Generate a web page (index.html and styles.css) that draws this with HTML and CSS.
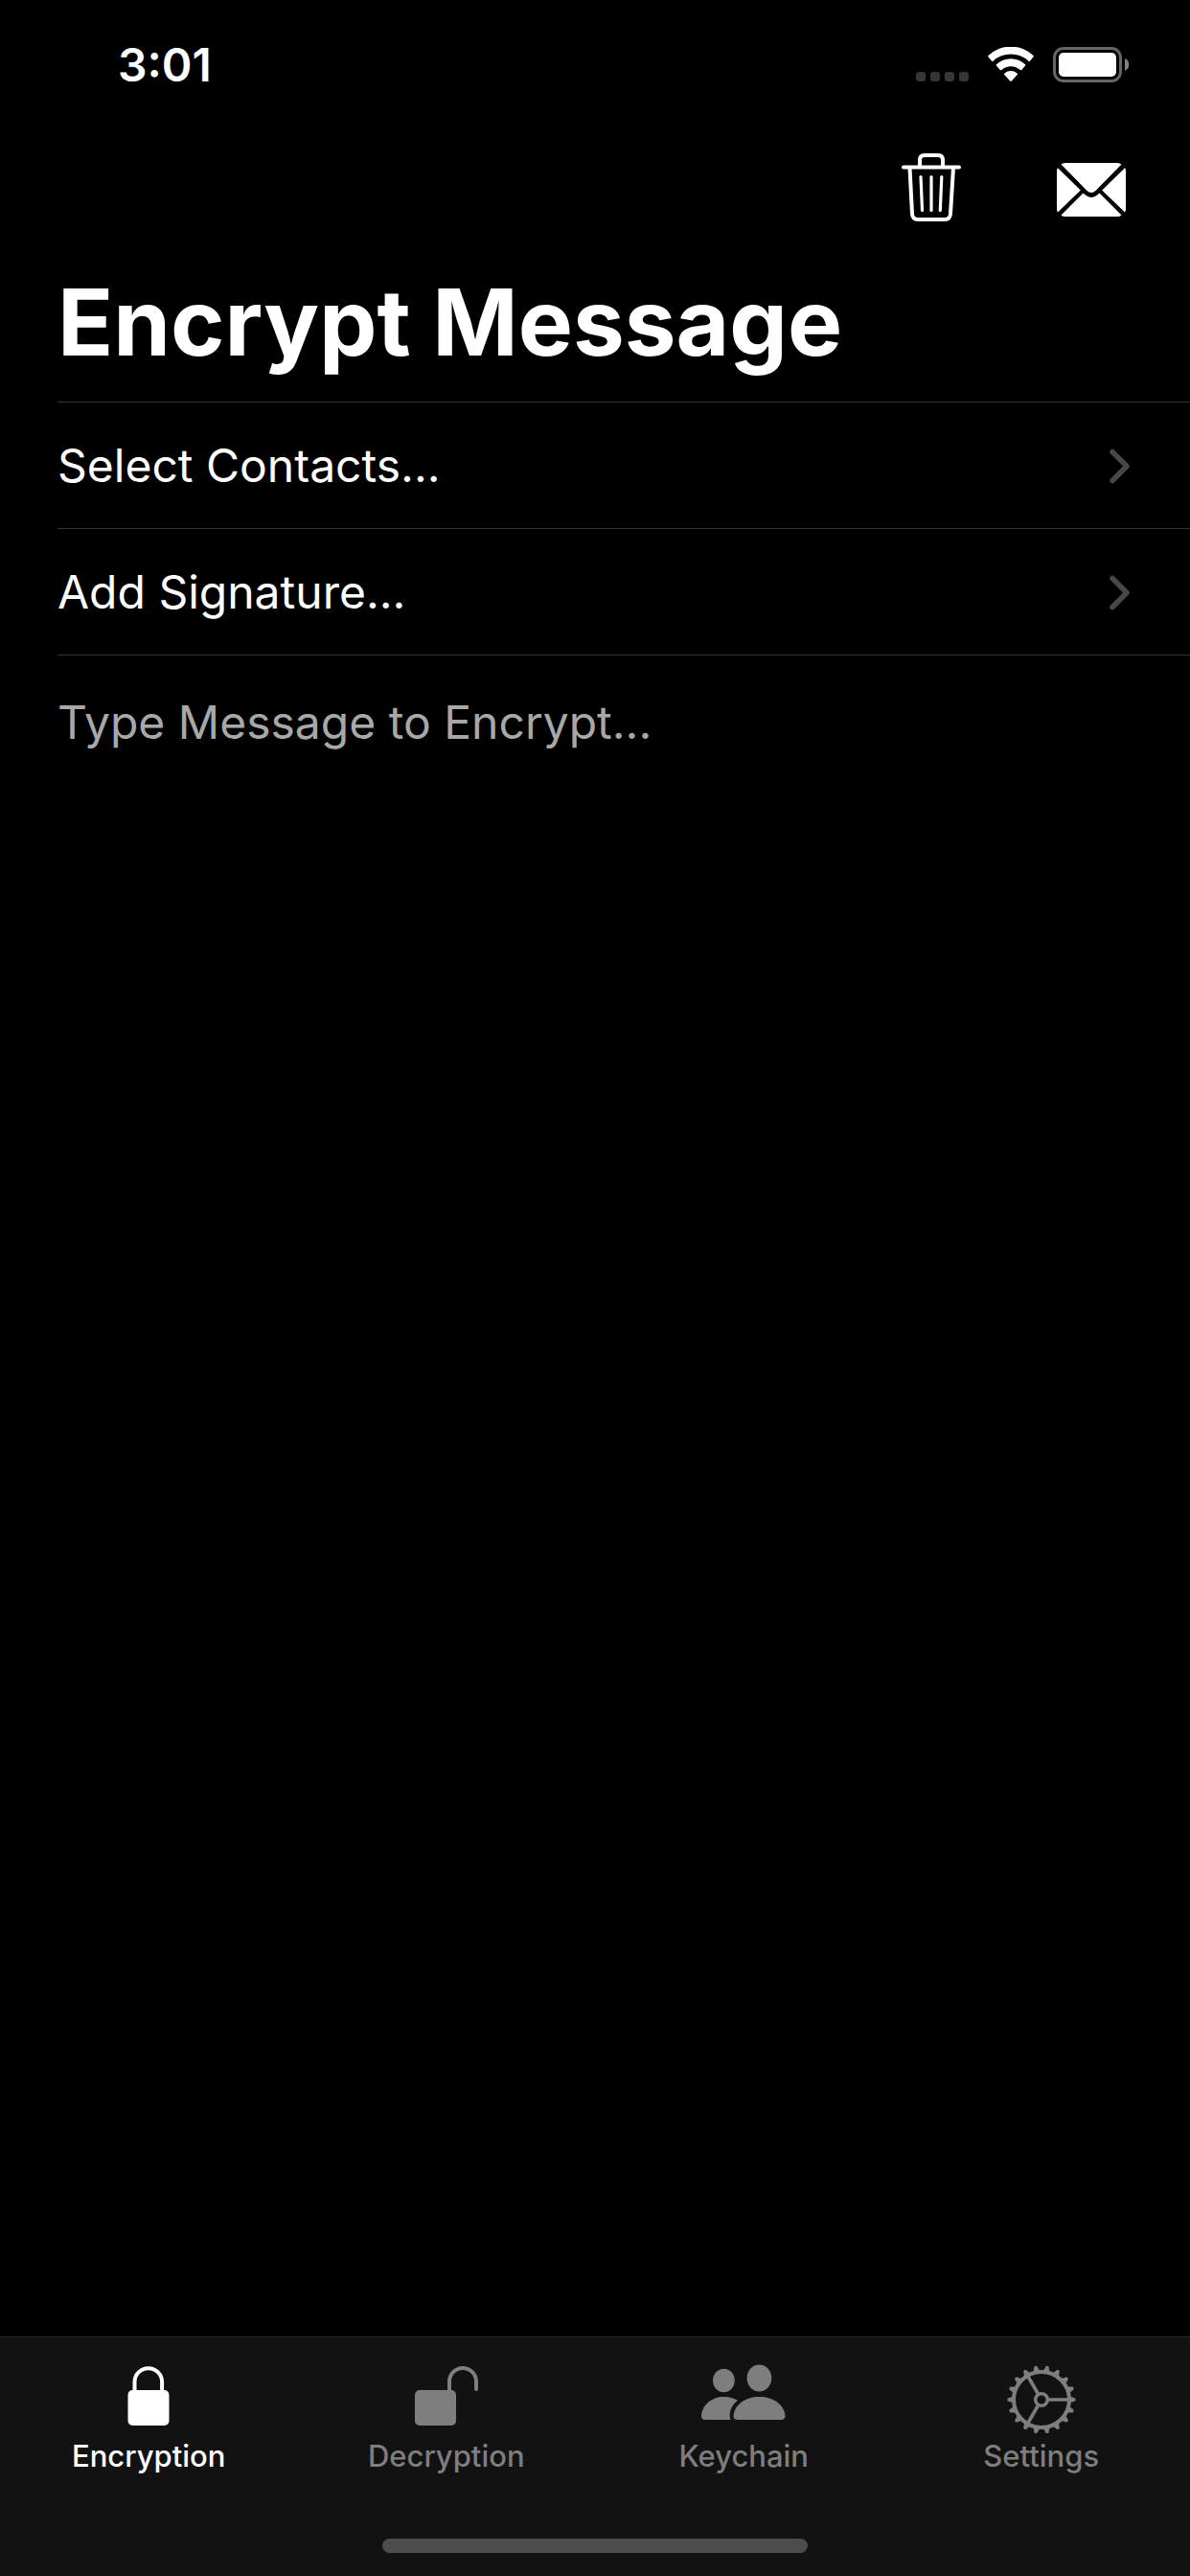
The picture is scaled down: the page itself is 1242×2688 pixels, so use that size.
FILE: index.html
```html
<!DOCTYPE html>
<html lang="en">
<head>
<meta charset="utf-8">
<meta name="viewport" content="width=device-width, initial-scale=1">
<title>Encrypt Message</title>
<link rel="stylesheet" href="styles.css">
</head>
<body>
<div class="app">
  <div class="status">
    <span class="status-time">3:01</span>
    <div class="status-icons">
      <svg width="55" height="37" viewBox="0 0 55 37" fill="#363636" aria-hidden="true">
        <rect x="0" y="26" width="10" height="10" rx="3"/>
        <rect x="15" y="26" width="10" height="10" rx="3"/>
        <rect x="30" y="26" width="10" height="10" rx="3"/>
        <rect x="45" y="26" width="10" height="10" rx="3"/>
      </svg>
      <svg width="48" height="37" viewBox="0 0 48 37" fill="#fff" aria-hidden="true">
        <path d="M0.4 10.2a1 1 0 0 1 .1-1.2A34 34 0 0 1 47.5 9a1 1 0 0 1 .1 1.2L43.9 14.800a1 1 0 0 1-1.400 0A27 27 0 0 0 5.500 14.800a1 1 0 0 1-1.400 0Z"/>
        <path d="M8.900 19.600a1 1 0 0 1 0-1.300A22 22 0 0 1 39.100 18.300a1 1 0 0 1 0 1.300L35.200 24a1 1 0 0 1-1.400 0A14.500 14.500 0 0 0 14.200 24a1 1 0 0 1-1.400 0Z"/>
        <path d="M17.300 28.900a1 1 0 0 1 .1-1.400A10 10 0 0 1 30.600 27.500a1 1 0 0 1 .1 1.400L24.700 35.600a1 1 0 0 1-1.400 0Z"/>
      </svg>
      <svg width="79" height="37" viewBox="0 0 79 37" aria-hidden="true">
        <rect x="1.500" y="1.500" width="69" height="34" rx="9.500" fill="none" stroke="#666" stroke-width="3"/>
        <rect x="6" y="6" width="60" height="25" rx="5" fill="#fff"/>
        <path d="M75 12a7 7 0 0 1 0 13Z" fill="#808080"/>
      </svg>
    </div>
  </div>

  <header class="header">
    <div class="toolbar">
      <button class="tool" type="button" aria-label="Clear message">
        <svg width="62" height="72" viewBox="0 0 62 72" fill="none" stroke="#fff" stroke-linecap="round" stroke-linejoin="round" aria-hidden="true">
          <path d="M2 14.500H60" stroke-width="4"/>
          <path d="M19 14V7Q19 2 24 2H38Q43 2 43 7V14" stroke-width="4"/>
          <path d="M8.500 15L11 63Q11.300 69 17 69H45Q50.700 69 51 63L54 15" stroke-width="4"/>
          <path d="M20 24.500L21.500 59.500M31 24.500V59.500M41.800 24.500L40.300 59.500" stroke-width="3.200"/>
        </svg>
      </button>
      <button class="tool" type="button" aria-label="Send by mail">
        <svg width="72" height="72" viewBox="0 0 72 72" fill="#fff" aria-hidden="true">
          <path d="M4.500 11.500Q6 10 9 10H63Q66 10 67.500 11.500L41 38.500Q36 43.500 31 38.500Z"/>
          <path d="M1 15.200L24.800 38.500L1 61.500Q0 60.500 0 58V18.500Q0 16.200 1 15.200Z"/>
          <path d="M71 15.200L47.200 38.500L71 61.500Q72 60.500 72 58V18.500Q72 16.200 71 15.200Z"/>
          <path d="M4.500 64.500L27.500 41.500L29.500 43.300Q36 48.500 42.500 43.300L44.500 41.500L67.500 64.500Q66 66 63 66H9Q6 66 4.500 64.500Z"/>
        </svg>
      </button>
    </div>
    <h1 class="title">Encrypt Message</h1>
  </header>

  <main class="form">
    <button class="row" type="button">
      <span>Select Contacts...</span>
      <svg width="22" height="37" viewBox="0 0 22 37" fill="none" stroke="#48484a" stroke-width="5.500" stroke-linecap="round" stroke-linejoin="round" aria-hidden="true"><path d="M3 3.500L18 18.500L3 33.500"/></svg>
    </button>
    <button class="row" type="button">
      <span>Add Signature...</span>
      <svg width="22" height="37" viewBox="0 0 22 37" fill="none" stroke="#48484a" stroke-width="5.500" stroke-linecap="round" stroke-linejoin="round" aria-hidden="true"><path d="M3 3.500L18 18.500L3 33.500"/></svg>
    </button>
    <textarea class="message" aria-label="Message" placeholder="Type Message to Encrypt..."></textarea>
  </main>

  <footer class="footer">
    <nav class="tabs">
      <a class="tab tab-active" href="#encryption" aria-current="page">
        <svg width="44" height="72" viewBox="0 0 44 72" aria-hidden="true">
          <rect x="0.500" y="27" width="43" height="37" rx="5" fill="currentColor"/>
          <path d="M7.500 29V18.500a14.300 14.300 0 0 1 28.600 0V29" fill="none" stroke="currentColor" stroke-width="4"/>
        </svg>
        <span>Encryption</span>
      </a>
      <a class="tab" href="#decryption">
        <svg width="66" height="72" viewBox="0 0 66 72" aria-hidden="true">
          <rect x="0" y="27" width="43" height="37" rx="5" fill="currentColor"/>
          <path d="M36 29V18a14 14 0 0 1 28 0V26" fill="none" stroke="currentColor" stroke-width="4" stroke-linecap="round"/>
        </svg>
        <span>Decryption</span>
      </a>
      <a class="tab" href="#keychain">
        <svg width="88" height="72" viewBox="0 0 88 72" fill="currentColor" aria-hidden="true">
          <ellipse cx="23.400" cy="17" rx="11.400" ry="12.200"/>
          <ellipse cx="60.400" cy="14.500" rx="12.800" ry="14"/>
          <path d="M4 58Q0 58 0 54C1 42 11 34 23.500 34Q31.500 34 38 37.700C31.500 42.500 28 50.500 30.500 58Z"/>
          <path d="M38 58Q33.500 58 33.500 54C34.500 42 46 34 60.500 34S86.500 42 87.500 54Q87.500 58 83 58Z"/>
        </svg>
        <span>Keychain</span>
      </a>
      <a class="tab" href="#settings">
        <svg width="72" height="72" viewBox="-36 -37 72 72" fill="none" stroke="currentColor" aria-hidden="true">
          <defs>
            <path id="tooth" d="M29 -4L32 -2.600L35.300 -1.500Q36 0 35.300 1.500L32 2.600L29 4Z" fill="currentColor" stroke="none"/>
            <g id="teeth"><use href="#tooth"/><use href="#tooth" transform="rotate(20)"/><use href="#tooth" transform="rotate(40)"/></g>
          </defs>
          <circle r="29" stroke-width="4"/>
          <circle r="6.300" stroke-width="3.500"/>
          <path d="M7.500 0H28M-3.800 -6.500L-14 -24.200M-3.800 6.500L-14 24.200" stroke-width="3.600"/>
          <use href="#teeth"/>
          <use href="#teeth" transform="rotate(60)"/>
          <use href="#teeth" transform="rotate(120)"/>
          <use href="#teeth" transform="rotate(180)"/>
          <use href="#teeth" transform="rotate(240)"/>
          <use href="#teeth" transform="rotate(300)"/>
        </svg>
        <span>Settings</span>
      </a>
    </nav>
    <div class="home-bar"></div>
  </footer>
</div>
</body>
</html>
```
FILE: styles.css
```css
* {
  box-sizing: border-box;
}

body {
  margin: 0;
  background: #000;
  color: #fff;
  font-family: Inter, "Liberation Sans", sans-serif;
}

button,
textarea {
  margin: 0;
  padding: 0;
  border: 0;
  border-radius: 0;
  background: none;
  color: inherit;
  font: inherit;
}

svg {
  display: block;
  flex: none;
}

.app {
  display: flex;
  flex-direction: column;
  min-height: 100vh;
}

.status {
  display: flex;
  justify-content: space-between;
  padding: 49px 64px 0 123px;
}

.status-time {
  font-size: 48px;
  font-weight: 600;
  line-height: 37px;
}

.status-icons {
  display: flex;
  gap: 20px;
}

.toolbar {
  display: flex;
  justify-content: flex-end;
  gap: 100px;
  padding: 74px 67px 0 60px;
}

.title {
  margin: 0;
  padding: 54px 60px 33px;
  font-size: 96px;
  font-weight: 700;
  line-height: 100px;
}

.form {
  display: flex;
  flex: 1;
  flex-direction: column;
  padding-left: 60px;
}

.row {
  display: flex;
  align-items: center;
  justify-content: space-between;
  padding: 36px 62px 35px 0;
  border-top: 1px solid #333335;
  font-size: 48px;
  line-height: 60px;
  text-align: left;
}

.message {
  flex: 1;
  padding: 40px 60px 40px 0;
  border-top: 1px solid #333335;
  font-size: 48px;
  line-height: 60px;
  outline: 0;
  resize: none;
}

.message::placeholder {
  color: #a8a8a8;
  opacity: 1;
}

.footer {
  padding-bottom: 24px;
  border-top: 1px solid #282828;
  background: #121212;
}

.tabs {
  display: grid;
  grid-template-columns: repeat(4, 1fr);
  padding: 28px 0 68px;
}

.tab {
  display: flex;
  flex-direction: column;
  align-items: center;
  gap: 6px;
  color: #7e7e7e;
  font-size: 31px;
  font-weight: 500;
  line-height: 36px;
  text-decoration: none;
}

.tab-active {
  color: #fff;
}

.home-bar {
  width: 444px;
  height: 15px;
  margin: 0 auto;
  border-radius: 8px;
  background: #4d4d4d;
}
```
